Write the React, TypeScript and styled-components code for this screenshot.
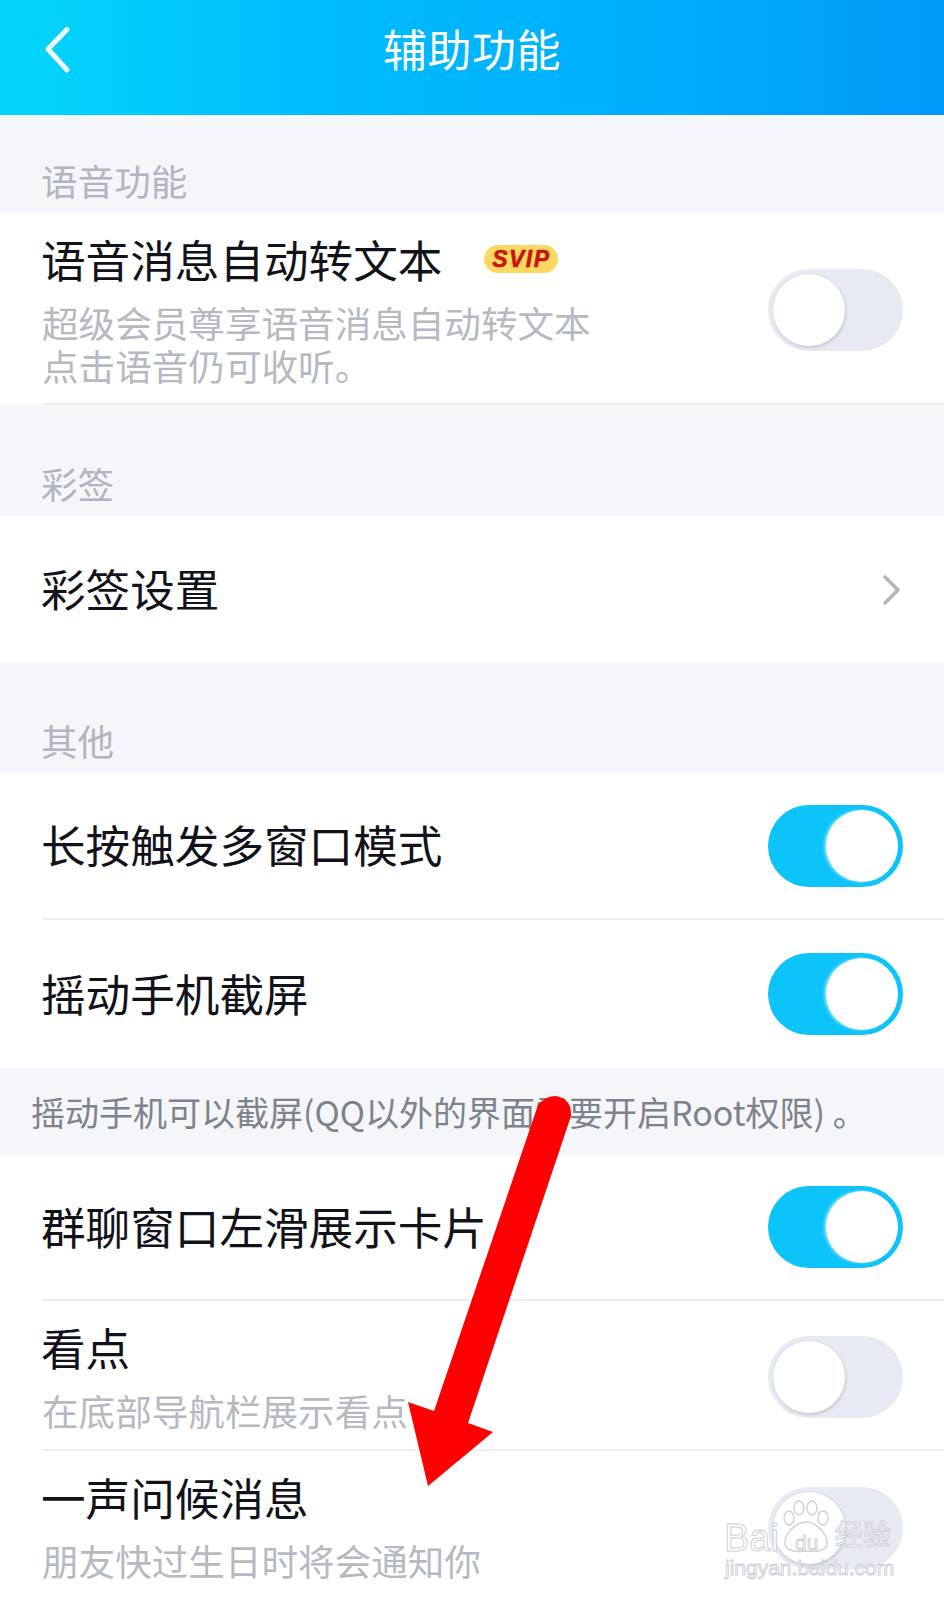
import React from "react";
import styled, { createGlobalStyle } from "styled-components";

const Global = createGlobalStyle`
  html, body {
    margin: 0;
    padding: 0;
    background: #f4f6f9;
  }
  body {
    font-family: "Noto Sans CJK SC", "Noto Sans", sans-serif;
  }
`;

const Page = styled.div`
  position: relative;
  width: 944px;
  height: 1600px;
  overflow: hidden;
  background: #f4f6f9;
`;

const Header = styled.header`
  display: flex;
  align-items: center;
  justify-content: center;
  height: 115px;
  background: linear-gradient(90deg, #03d6fa 0%, #00bbfe 35%, #00aefc 70%, #0299f8 100%);
`;

const BackIcon = styled.svg`
  position: absolute;
  left: 40px;
  top: 20px;
`;

const Title = styled.h1`
  margin: 0 0 20px;
  font-size: 44px;
  font-weight: 400;
  line-height: 60px;
  color: #fff;
  letter-spacing: 0.5px;
`;

const SectionHead = styled.div<{ $h: number }>`
  display: flex;
  align-items: flex-end;
  height: ${({ $h }) => $h}px;
  padding: 0 0 7px 41px;
  box-sizing: border-box;
  font-size: 36.6px;
  line-height: 50px;
  color: #b2b5bf;
`;

const Group = styled.section`
  background: #fff;
`;

const Row = styled.div<{ $h: number; $line?: boolean; $top?: boolean }>`
  display: flex;
  align-items: ${({ $top }) => ($top ? "flex-start" : "center")};
  justify-content: space-between;
  position: relative;
  height: ${({ $h }) => $h}px;
  margin-left: 42px;
  padding-right: 41px;
  box-sizing: border-box;
  border-bottom: ${({ $line }) => ($line ? "2px solid #eceef2" : "none")};
`;

const RowText = styled.div`
  padding-top: 16px;
`;

const RowTitle = styled.div`
  display: flex;
  align-items: center;
  padding-bottom: 3px;
  margin-left: -1px;
  font-size: 44.6px;
  line-height: 60px;
  color: #12131a;
  white-space: nowrap;
`;

const Sub = styled.div`
  margin-top: 9px;
  font-size: 36.6px;
  line-height: 43px;
  color: #b7b9c2;
  white-space: nowrap;
`;

const Badge = styled.span`
  display: inline-flex;
  align-items: center;
  justify-content: center;
  width: 74px;
  height: 28px;
  margin: 0 0 0 42px;
  border-radius: 14px;
  background: #fbd862;
  font-family: "Liberation Sans", sans-serif;
  font-size: 23px;
  font-weight: 700;
  font-style: italic;
  letter-spacing: 1.5px;
  -webkit-text-stroke: 0.6px #c8150c;
  color: #c8150c;
`;

const Track = styled.div<{ $on: boolean; $center?: boolean }>`
  position: relative;
  flex: none;
  align-self: ${({ $center }) => ($center ? "center" : "auto")};
  margin-top: ${({ $center }) => ($center ? "3px" : "0")};
  width: 135px;
  height: 82px;
  border-radius: 41px;
  background: ${({ $on }) => ($on ? "#0cc3fa" : "#e8eaf3")};
`;

const Thumb = styled.div<{ $on: boolean }>`
  position: absolute;
  top: 5px;
  left: ${({ $on }) => ($on ? "58px" : "5px")};
  width: 72px;
  height: 72px;
  border-radius: 50%;
  background: #fff;
  box-shadow: ${({ $on }) =>
    $on
      ? "-2px 0 3px rgba(255,255,255,0.5)"
      : "0 0 0 1px rgba(215,217,228,0.7), 1px 2px 3px rgba(150,152,170,0.45)"};
`;

const Chevron = styled.svg`
  flex: none;
  margin-right: 1px;
`;

const Note = styled.div`
  display: flex;
  align-items: center;
  height: 87px;
  padding-left: 31px;
  font-size: 34px;
  color: #7e828a;
  white-space: nowrap;
`;

const Arrow = styled.svg`
  position: absolute;
  left: 0;
  top: 0;
  pointer-events: none;
`;

const Watermark = styled.div`
  position: absolute;
  left: 724px;
  top: 1495px;
  width: 180px;
  height: 90px;
  pointer-events: none;
`;

const MarkText = styled.span<{ $x: number; $y: number; $size: number }>`
  position: absolute;
  left: ${({ $x }) => $x}px;
  top: ${({ $y }) => $y}px;
  font-family: "Liberation Sans", "Noto Sans CJK SC", sans-serif;
  font-size: ${({ $size }) => $size}px;
  line-height: 1;
  white-space: nowrap;
  -webkit-text-stroke: 1px #cfd1d8;
  color: rgba(255, 255, 255, 0.85);
`;

const Paw = styled.svg`
  position: absolute;
  left: 57px;
  top: 5px;
`;

function Toggle({ on, center }: { on: boolean; center?: boolean }) {
  return (
    <Track $on={on} $center={center}>
      <Thumb $on={on} />
    </Track>
  );
}

export default function App() {
  return (
    <Page>
      <Global />
      <Header>
        <BackIcon width="34" height="60" viewBox="0 0 34 60" fill="none">
          <path d="M27 9.5 L8 29 L27 50" stroke="#eefcff" strokeWidth="5" strokeLinecap="round" strokeLinejoin="round" />
        </BackIcon>
        <Title>辅助功能</Title>
      </Header>

      <SectionHead $h={98}>语音功能</SectionHead>
      <Group>
        <Row $h={192} $line $top>
          <RowText>
            <RowTitle>
              语音消息自动转文本
              <Badge>SVIP</Badge>
            </RowTitle>
            <Sub>
              超级会员尊享语音消息自动转文本
              <br />
              点击语音仍可收听。
            </Sub>
          </RowText>
          <Toggle on={false} center />
        </Row>
      </Group>

      <SectionHead $h={111}>彩签</SectionHead>
      <Group>
        <Row $h={147}>
          <RowTitle>彩签设置</RowTitle>
          <Chevron width="20" height="32" viewBox="0 0 20 32" fill="none">
            <path d="M3 3 L16 16 L3 29" stroke="#b3b6bf" strokeWidth="3.6" strokeLinecap="round" strokeLinejoin="round" />
          </Chevron>
        </Row>
      </Group>

      <SectionHead $h={110}>其他</SectionHead>
      <Group>
        <Row $h={147} $line>
          <RowTitle>长按触发多窗口模式</RowTitle>
          <Toggle on />
        </Row>
        <Row $h={148}>
          <RowTitle>摇动手机截屏</RowTitle>
          <Toggle on />
        </Row>
      </Group>

      <Note>摇动手机可以截屏(QQ以外的界面需要开启Root权限) 。</Note>

      <Group>
        <Row $h={146} $line>
          <RowTitle>群聊窗口左滑展示卡片</RowTitle>
          <Toggle on />
        </Row>
        <Row $h={150} $line $top>
          <RowText>
            <RowTitle>看点</RowTitle>
            <Sub>在底部导航栏展示看点</Sub>
          </RowText>
          <Toggle on={false} center />
        </Row>
        <Row $h={150} $top>
          <RowText>
            <RowTitle>一声问候消息</RowTitle>
            <Sub>朋友快过生日时将会通知你</Sub>
          </RowText>
          <Toggle on={false} center />
        </Row>
      </Group>

      <Arrow width="944" height="1600" viewBox="0 0 944 1600">
        <path
          d="M538 1105 Q545 1096 556 1096 Q572 1099 571 1116 L468 1423 L493 1432 L428 1486 L408 1402 L434 1411 Z"
          fill="#fe0000"
        />
      </Arrow>

      <Watermark>
        <Paw width="50" height="54" viewBox="0 0 50 54" fill="rgba(255,255,255,0.5)" stroke="#cfd1d8" strokeWidth="1.4">
          <ellipse cx="8" cy="18" rx="5" ry="7" />
          <ellipse cx="18" cy="8" rx="5" ry="7" />
          <ellipse cx="31" cy="8" rx="5" ry="7" />
          <ellipse cx="42" cy="18" rx="5" ry="7" />
          <path d="M25 22 C35 22 47 34 46 44 C45 52 33 52 25 51 C17 52 5 52 4 44 C3 34 15 22 25 22 Z" />
        </Paw>
        <MarkText $x={0} $y={24} $size={38}>Bai</MarkText>
        <MarkText $x={71} $y={37} $size={21}>du</MarkText>
        <MarkText $x={111} $y={27} $size={28}>经验</MarkText>
        <MarkText $x={1} $y={62} $size={21}>jingyan.baidu.com</MarkText>
      </Watermark>
    </Page>
  );
}
